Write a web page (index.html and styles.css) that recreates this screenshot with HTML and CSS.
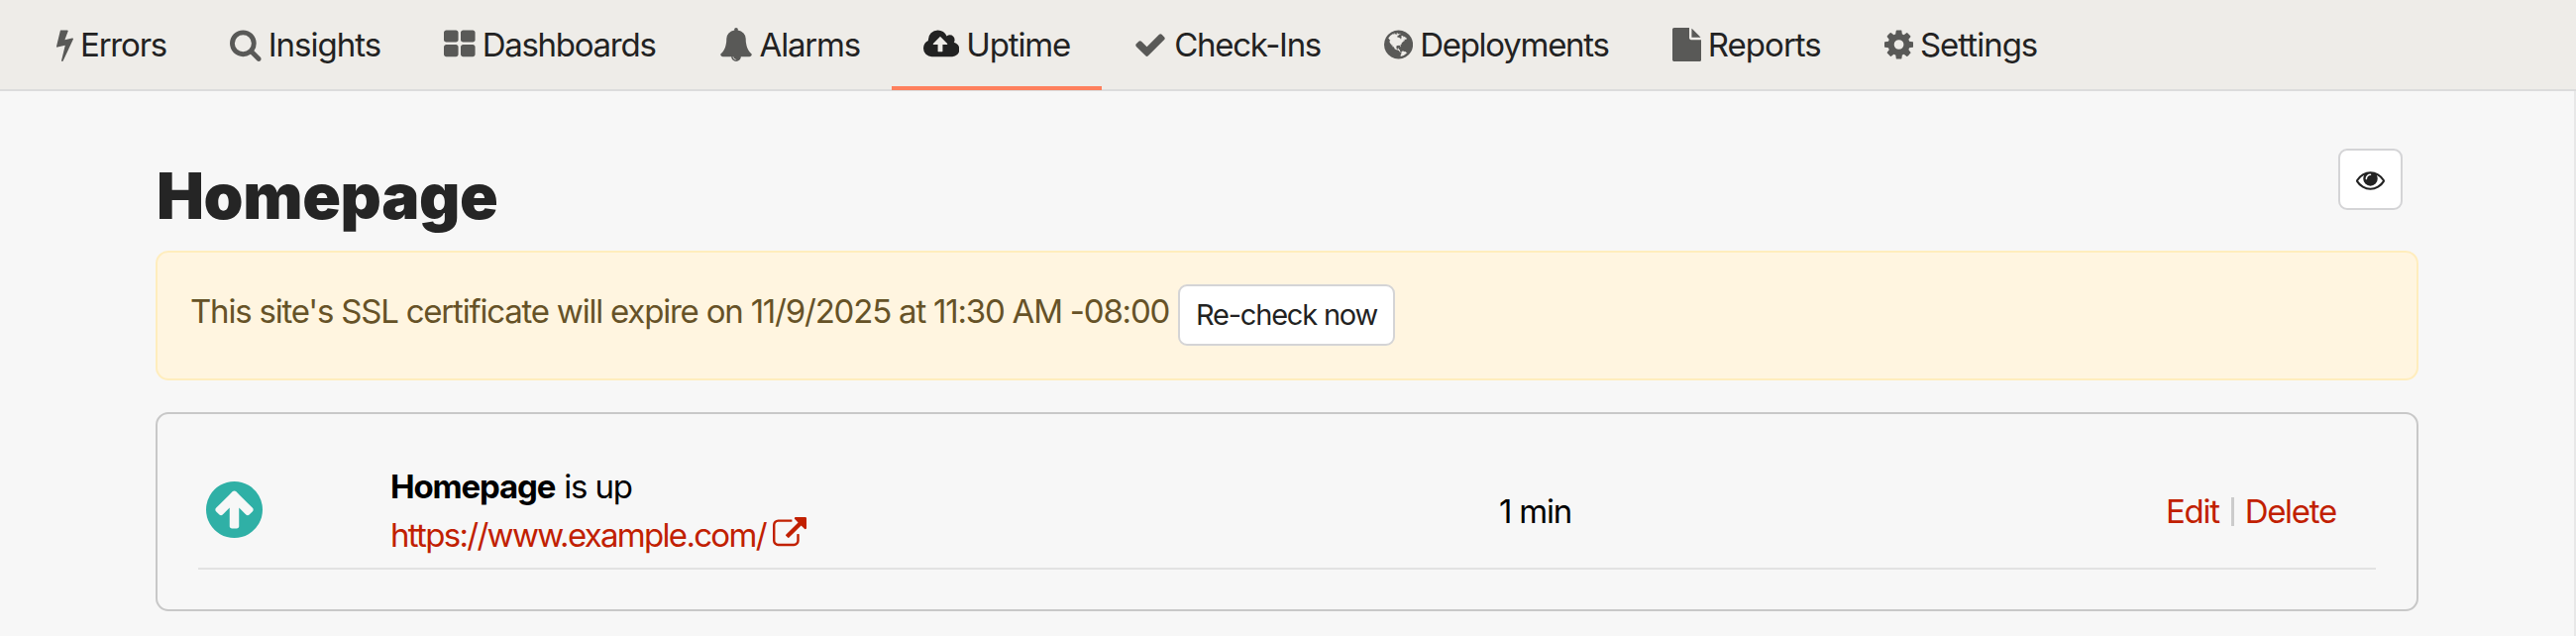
FILE: index.html
```html
<!DOCTYPE html>
<html lang="en">
<head>
<meta charset="utf-8">
<title>Homepage</title>
<link rel="stylesheet" href="styles.css">
</head>
<body>
<nav class="nav">
<a class="tab errors"><svg class="icon" viewBox="448 0 896 1792"><path d="M1333 566q18 20 7 44l-540 1157q-13 25-42 25-4 0-14-2-17-5-25.5-19t-4.5-30l197-808-406 101q-4 1-12 1-18 0-31-11-18-15-13-39l201-825q4-14 16-23t28-9h328q19 0 32 12.5t13 29.5q0 8-5 18l-171 463 396-98q8-2 12-2 19 0 34 15z"/></svg><span>Errors</span></a>
<a class="tab insights"><svg class="icon" viewBox="64 0 1664 1792"><path d="M1216 832q0-185-131.5-316.5t-316.5-131.5-316.5 131.5-131.5 316.5 131.5 316.5 316.5 131.5 316.5-131.5 131.5-316.5zm512 832q0 52-38 90t-90 38q-54 0-90-38l-343-342q-179 124-399 124-143 0-273.5-55.5t-225-150-150-225-55.5-273.5 55.5-273.5 150-225 225-150 273.5-55.5 273.5 55.5 225 150 150 225 55.5 273.5q0 220-124 399l343 343q37 37 37 90z"/></svg><span>Insights</span></a>
<a class="tab dashboards"><svg class="icon" viewBox="64 0 1664 1792"><path d="M832 1024v384q0 52-38 90t-90 38h-512q-52 0-90-38t-38-90v-384q0-52 38-90t90-38h512q52 0 90 38t38 90zm0-768v384q0 52-38 90t-90 38h-512q-52 0-90-38t-38-90v-384q0-52 38-90t90-38h512q52 0 90 38t38 90zm896 768v384q0 52-38 90t-90 38h-512q-52 0-90-38t-38-90v-384q0-52 38-90t90-38h512q52 0 90 38t38 90zm0-768v384q0 52-38 90t-90 38h-512q-52 0-90-38t-38-90v-384q0-52 38-90t90-38h512q52 0 90 38t38 90z"/></svg><span>Dashboards</span></a>
<a class="tab alarms"><svg class="icon" viewBox="0 0 1792 1792"><path d="M912 1696q0-16-16-16-59 0-101.5-42.5t-42.5-101.5q0-16-16-16t-16 16q0 73 51.5 124.5t124.5 51.5q16 0 16-16zm816-288q0 52-38 90t-90 38h-448q0 106-75 181t-181 75-181-75-75-181h-448q-52 0-90-38t-38-90q50-42 91-88t85-119.5 74.5-158.5 50-206 19.5-260q0-152 117-282.5t307-158.5q-8-19-8-39 0-40 28-68t68-28 68 28 28 68q0 20-8 39 190 28 307 158.5t117 282.5q0 139 19.5 260t50 206 74.5 158.5 85 119.5 91 88z"/></svg><span>Alarms</span></a>
<a class="tab uptime active"><svg class="icon" viewBox="-64 0 1920 1792"><path d="M1216 864q0-14-9-23l-352-352q-9-9-23-9t-23 9l-351 351q-10 12-10 24 0 14 9 23t23 9h224v352q0 13 9.5 22.5t22.5 9.5h192q13 0 22.5-9.5t9.5-22.5v-352h224q13 0 22.5-9.5t9.5-22.5zm640 288q0 159-112.5 271.5t-271.5 112.5h-1088q-185 0-316.5-131.5t-131.5-316.5q0-130 70-240t188-165q-2-30-2-43 0-212 150-362t362-150q156 0 285.5 87t188.5 231q71-62 166-62 106 0 181 75t75 181q0 76-41 138 130 31 213.5 135.5t83.5 238.5z"/></svg><span>Uptime</span></a>
<a class="tab checkins"><svg class="icon" viewBox="0 0 1792 1792"><path d="M1671 566q0 40-28 68l-724 724-136 136q-28 28-68 28t-68-28l-136-136-362-362q-28-28-28-68t28-68l136-136q28-28 68-28t68 28l294 295 656-657q28-28 68-28t68 28l136 136q28 28 28 68z"/></svg><span>Check-Ins</span></a>
<a class="tab deployments"><svg class="icon" viewBox="128 0 1536 1792"><path d="M896 128q209 0 385.5 103t279.5 279.5 103 385.5-103 385.5-279.5 279.5-385.5 103-385.5-103-279.5-279.5-103-385.5 103-385.5 279.5-279.5 385.5-103zm274 521q-2 1-9.5 9.5t-13.5 9.5q2 0 4.5-5t5-11 3.5-7q6-7 22-15 14-6 52-12 34-8 51 11-2-2 9.5-13t14.5-12q3-2 15-4.5t15-7.5l2-22q-12 1-17.5-7t-6.5-21q0 2-6 8 0-7-4.5-8t-11.5 1-9 1q-10-3-15-7.5t-8-16.5-4-15q-2-5-9.5-11t-9.5-10q-1-2-2.5-5.5t-3-6.5-4-5.5-5.5-2.5-7 5-7.5 10-4.5 5q-3-2-6-1.5t-4.5 1-4.5 3-5 3.5q-3 2-8.5 3t-8.5 2q15-5-1-11-10-4-16-3 9-4 7.5-12t-8.5-14h5q-1-4-8.5-8.5t-17.5-8.5-13-6q-8-5-34-9.5t-33-.5q-5 6-4.5 10.5t4 14 3.5 12.5q1 6-5.5 13t-6.5 12q0 7 14 15.5t10 21.5q-3 8-16 16t-16 12q-5 8-1.5 18.5t10.5 16.5q2 2 1.5 4t-3.5 4.5-5.5 4-6.5 3.5l-3 2q-11 5-20.5-6t-13.5-26q-7-25-16-30-23-8-29 1-5-13-41-26-25-9-58-4 6-1 0-15-7-15-19-12 3-6 4-17.5t1-13.5q3-13 12-23 1-1 7-8.5t9.5-13.5.5-6q35 4 50-11 5-5 11.5-17t10.5-17q9-6 14-5.5t14.5 5.5 14.5 5q14 1 15.5-11t-7.5-20q12 1 3-17-4-7-8-9-12-4-27 5-8 4 2 8-1-1-9.5 10.5t-16.5 17.5-16-5q-1-1-5.5-13.5t-9.5-13.5q-8 0-16 15 3-8-11-15t-24-8q19-12-8-27-7-4-20.5-5t-19.5 4q-5 7-5.5 11.5t5 8 10.5 5.5 11.5 4 8.5 3q14 10 8 14-2 1-8.5 3.5t-11.5 4.5-6 4q-3 4 0 14t-2 14q-5-5-9-17.5t-7-16.5q7 9-25 6l-10-1q-4 0-16 2t-20.5 1-13.5-8q-4-8 0-20 1-4 4-2-4-3-11-9.5t-10-8.5q-46 15-94 41 6 1 12-1 5-2 13-6.5t10-5.5q34-14 42-7l5-5q14 16 20 25-7-4-30-1-20 6-22 12 7 12 5 18-4-3-11.5-10t-14.5-11-15-5q-16 0-22 1-146 80-235 222 7 7 12 8 4 1 5 9t2.5 11 11.5-3q9 8 3 19 1-1 44 27 19 17 21 21 3 11-10 18-1-2-9-9t-9-4q-3 5 .5 18.5t10.5 12.5q-7 0-9.5 16t-2.5 35.5-1 23.5l2 1q-3 12 5.5 34.5t21.5 19.5q-13 3 20 43 6 8 8 9 3 2 12 7.5t15 10 10 10.5q4 5 10 22.5t14 23.5q-2 6 9.5 20t10.5 23q-1 0-2.5 1t-2.5 1q3 7 15.5 14t15.5 13q1 3 2 10t3 11 8 2q2-20-24-62-15-25-17-29-3-5-5.5-15.5t-4.5-14.5q2 0 6 1.5t8.5 3.5 7.5 4 2 3q-3 7 2 17.5t12 18.5 17 19 12 13q6 6 14 19.5t0 13.5q9 0 20 10.5t17 19.5q5 8 8 26t5 24q2 7 8.5 13.5t12.5 9.5l16 8 13 7q5 2 18.5 10.5t21.5 11.5q10 4 16 4t14.5-2.5 13.5-3.5q15-2 29 15t21 21q36 19 55 11-2 1 .5 7.5t8 15.5 9 14.5 5.5 8.5q5 6 18 15t18 15q6-4 7-9-3 8 7 20t18 10q14-3 14-32-31 15-49-18 0-1-2.5-5.5t-4-8.5-2.5-8.5 0-7.5 5-3q9 0 10-3.5t-2-12.5-4-13q-1-8-11-20t-12-15q-5 9-16 8t-16-9q0 1-1.5 5.5t-1.5 6.5q-13 0-15-1 1-3 2.5-17.5t3.5-22.5q1-4 5.5-12t7.5-14.5 4-12.5-4.5-9.5-17.5-2.5q-19 1-26 20-1 3-3 10.5t-5 11.5-9 7q-7 3-24 2t-24-5q-13-8-22.5-29t-9.5-37q0-10 2.5-26.5t3-25-5.5-24.5q3-2 9-9.5t10-10.5q2-1 4.5-1.5t4.5 0 4-1.5 3-6q-1-1-4-3-3-3-4-3 7 3 28.5-1.5t27.5 1.5q15 11 22-2 0-1-2.5-9.5t-.5-13.5q5 27 29 9 3 3 15.5 5t17.5 5q3 2 7 5.5t5.5 4.5 5-.5 8.5-6.5q10 14 12 24 11 40 19 44 7 3 11 2t4.5-9.5 0-14-1.5-12.5l-1-8v-18l-1-8q-15-3-18.5-12t1.5-18.5 15-18.5q1-1 8-3.5t15.5-6.5 12.5-8q21-19 15-35 7 0 11-9-1 0-5-3t-7.5-5-4.5-2q9-5 2-16 5-3 7.5-11t7.5-10q9 12 21 2 7-8 1-16 5-7 20.5-10.5t18.5-9.5q7 2 8-2t1-12 3-12q4-5 15-9t13-5l17-11q3-4 0-4 18 2 31-11 10-11-6-20 3-6-3-9.5t-15-5.5q3-1 11.5-.5t10.5-1.5q15-10-7-16-17-5-43 12zm-163 877q206-36 351-189-3-3-12.5-4.5t-12.5-3.5q-18-7-24-8 1-7-2.5-13t-8-9-12.5-8-11-7q-2-2-7-6t-7-5.5-7.5-4.5-8.5-2-10 1l-3 1q-3 1-5.5 2.5t-5.5 3-4 3 0 2.5q-21-17-36-22-5-1-11-5.5t-10.5-7-10-1.5-11.5 7q-5 5-6 15t-2 13q-7-5 0-17.5t2-18.5q-3-6-10.5-4.5t-12 4.5-11.5 8.5-9 6.5-8.5 5.5-8.5 7.5q-3 4-6 12t-5 11q-2-4-11.5-6.5t-9.5-5.5q2 10 4 35t5 38q7 31-12 48-27 25-29 40-4 22 12 26 0 7-8 20.5t-7 21.5q0 6 2 16z"/></svg><span>Deployments</span></a>
<a class="tab reports"><svg class="icon" viewBox="128 0 1536 1792"><path d="M1152 512v-472q22 14 36 28l408 408q14 14 28 36h-472zm-128 32q0 40 28 68t68 28h544v1056q0 40-28 68t-68 28h-1344q-40 0-68-28t-28-68v-1600q0-40 28-68t68-28h800v544z"/></svg><span>Reports</span></a>
<a class="tab settings"><svg class="icon" viewBox="128 0 1536 1792"><path d="M1152 896q0-106-75-181t-181-75-181 75-75 181 75 181 181 75 181-75 75-181zm512-109v222q0 12-8 23t-20 13l-185 28q-19 54-39 91 35 50 107 138 10 12 10 25t-9 23q-27 37-99 108t-94 71q-12 0-26-9l-138-108q-44 23-91 38-16 136-29 186-7 28-36 28h-222q-14 0-24.5-8.5t-11.5-21.5l-28-184q-49-16-90-37l-141 107q-10 9-25 9-14 0-25-11-126-114-165-168-7-10-7-23 0-12 8-23 15-21 51-66.5t54-70.5q-27-50-41-99l-183-27q-13-2-21-12.5t-8-23.5v-222q0-12 8-23t19-13l186-28q14-46 39-92-40-57-107-138-10-12-10-24 0-10 9-23 26-36 98.5-107.5t94.5-71.5q13 0 26 10l138 107q44-23 91-38 16-136 29-186 7-28 36-28h222q14 0 24.5 8.5t11.5 21.5l28 184q49 16 90 37l142-107q9-9 24-9 13 0 25 10 129 119 165 170 7 8 7 22 0 12-8 23-15 21-51 66.5t-54 70.5q26 50 41 98l183 28q13 2 21 12.5t8 23.5z"/></svg><span>Settings</span></a>
</nav>
<main class="content">
<header class="head">
<h1 class="title"><span>Homepage</span></h1>
<button class="btn watch" aria-label="View"><svg class="eye" viewBox="0 0 1792 1792"><path d="M1664 960q-152-236-381-353 61 104 61 225 0 185-131.5 316.5t-316.5 131.5-316.5-131.5-131.5-316.5q0-121 61-225-229 117-381 353 133 205 333.5 326.5t434.5 121.5 434.5-121.5 333.5-326.5zm-720-384q0-20-14-34t-34-14q-125 0-214.5 89.5t-89.5 214.5q0 20 14 34t34 14 34-14 14-34q0-86 61-147t147-61q20 0 34-14t14-34zm848 384q0 34-20 69-140 230-376.5 368.5t-499.5 138.5-499.5-139-376.5-368q-20-35-20-69t20-69q140-229 376.5-368t499.5-139 499.5 139 376.5 368q20 35 20 69z"/></svg></button>
</header>
<section class="alert">
<span class="notice">This site's SSL certificate will expire on 11/9/2025 at 11:30 AM -08:00</span>
<button class="btn recheck"><span>Re-check now</span></button>
</section>
<section class="card">
<div class="row">
<svg class="status" viewBox="128 128 1536 1536"><path d="M1412 897q0-27-18-45l-362-362-91-91q-18-18-45-18t-45 18l-91 91-362 362q-18 18-18 45t18 45l91 91q18 18 45 18t45-18l189-189v502q0 26 19 45t45 19h128q26 0 45-19t19-45v-502l189 189q19 19 45 19t45-19l91-91q18-18 18-45zm252-1q0 209-103 385.5t-279.5 279.5-385.5 103-385.5-103-279.5-279.5-103-385.5 103-385.5 279.5-279.5 385.5-103 385.5 103 279.5 279.5 103 385.5z"/></svg>
<div class="site">
<div class="state"><b>Homepage</b><span class="isup">is up</span></div>
<a class="link"><span>https://www.example.com/</span><svg class="ext" viewBox="0 0 1792 1792"><path d="M1408 928v320q0 119-84.5 203.5t-203.5 84.5h-832q-119 0-203.5-84.5t-84.5-203.5v-832q0-119 84.5-203.5t203.5-84.5h704q14 0 23 9t9 23v64q0 14-9 23t-23 9h-704q-66 0-113 47t-47 113v832q0 66 47 113t113 47h832q66 0 113-47t47-113v-320q0-14 9-23t23-9h64q14 0 23 9t9 23zm384-864v512q0 26-19 45t-45 19-45-19l-176-176-652 652q-10 10-23 10t-23-10l-114-114q-10-10-10-23t10-23l652-652-176-176q-19-19-19-45t19-45 45-19h512q26 0 45 19t19 45z"/></svg></a>
</div>
<div class="interval"><span>1 min</span></div>
<div class="actions"><a class="edit"><span>Edit</span></a><i class="sep"></i><a class="delete"><span>Delete</span></a></div>
</div>
</section>
</main>
</body>
</html>
```
FILE: styles.css
```css
* { box-sizing: border-box; }
body { margin: 0; height: 642px; overflow: hidden; background: #f7f7f7; color: #000; font: 33px/48px Inter, "Liberation Sans", sans-serif; letter-spacing: -1.2px; display: flex; flex-direction: column; }
svg { display: block; flex: none; }
span, b { white-space: nowrap; }
.nav { height: 92px; flex: none; display: flex; padding-left: 25px; background: #eeece8; border-bottom: 2px solid #dcdcdc; color: #222; }
.tab { height: 91px; display: flex; align-items: center; padding: 2px 32px 0; gap: 7px; border-bottom: 4px solid transparent; }
.tab span { padding-top: 1px; }
.insights { letter-spacing: -1px; }
.dashboards, .checkins, .deployments { letter-spacing: -1.27px; }
.uptime { letter-spacing: -1.15px; }
.reports { letter-spacing: -0.98px; }
.settings { letter-spacing: -1px; }
.icon { height: 34px; width: auto; fill: #595957; }
.active { border-color: #fe805d; }
.active .icon { fill: #222; }
.content { flex: 1; padding: 0 157px; border-right: 2px solid #e8e8e8; }
.head { height: 161px; display: flex; justify-content: space-between; padding: 58px 16px 0 1px; }
.title { margin: 0; font-size: 64px; line-height: 96px; font-weight: 900; letter-spacing: -0.4px; color: #252525; }
.btn { margin: 0; padding: 0; height: 62px; display: flex; align-items: center; justify-content: center; background: #fff; border: 2px solid #d4d4d6; border-radius: 9px; font: 29px/36px Inter, sans-serif; color: #222; }
.watch { width: 65px; }
.eye { width: 29px; height: 29px; fill: #222; }
.alert { height: 131px; padding: 32px 33px; display: flex; background: #fff5e0; border: 2px solid #ffedbd; border-radius: 13px; color: #665227; }
.notice { width: 997px; padding-top: 3px; letter-spacing: -1.21px; }
.recheck { width: 219px; letter-spacing: -1.2px; }
.card { margin-top: 32px; height: 201px; padding: 29px 41px; border: 2px solid #c8c8c8; border-radius: 13px; }
.row { height: 128px; display: flex; border-bottom: 2px solid #e2e2e2; }
.status { width: 57px; height: 57px; margin: 39px 0 0 8px; fill: #2fb0a6; }
.site { width: 1118px; margin: 20px 0 0 129px; }
.state, .link { display: flex; }
.state { gap: 9px; letter-spacing: -1.15px; }
.link { gap: 7px; margin-top: 1px; letter-spacing: -1.7px; }
.link, .actions { color: #c12000; }
.ext { width: 34px; height: 34px; margin-top: 6px; fill: #c12000; }
.interval { width: 674px; margin-top: 45px; padding-left: 1px; }
.actions { display: flex; margin-top: 45px; letter-spacing: -1.3px; }
.sep { width: 3px; height: 29px; background: #ccc; margin: 10px 11px 0 12px; }
```
